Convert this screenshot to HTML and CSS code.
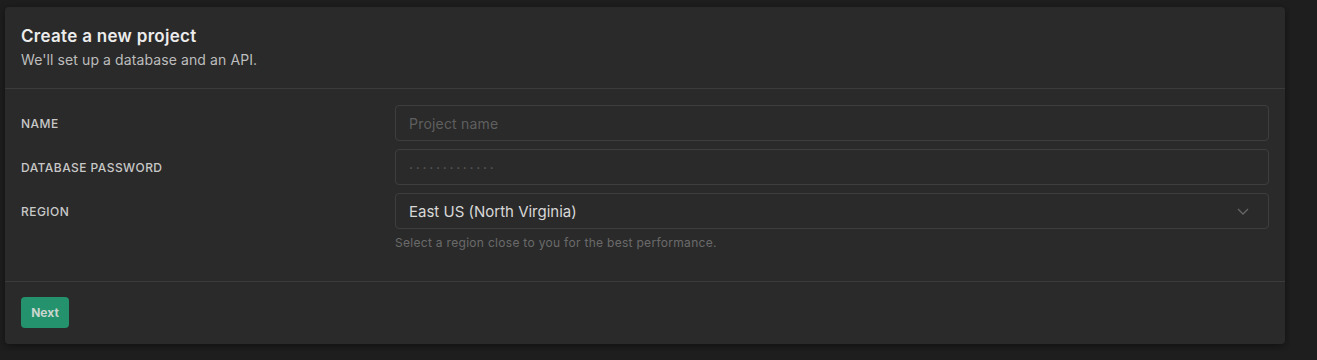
FILE: index.html
```html
<!DOCTYPE html>
<html>
	<head>
		<meta charset="UTF-8">
		<title>Create a new project</title>
		<link rel="stylesheet" href="styles.css">
	</head>
	<body>
		<div class="card">
			<div class="card-head">
				<h1>Create a new project</h1>
				<p>We'll set up a database and an API.</p>
			</div>
			<div class="card-body">
				<div class="row">
					<label>NAME</label>
					<div class="field">Project name</div>
				</div>
				<div class="row">
					<label>DATABASE PASSWORD</label>
					<div class="field dots">·············</div>
				</div>
				<div class="row">
					<label>REGION</label>
					<div class="field select">
						<span>East US (North Virginia)</span>
						<svg width="14" height="14" viewBox="0 0 14 14"><path d="M2 5l5 5 5-5" fill="none" stroke="#666" stroke-width="1.3"/></svg>
					</div>
				</div>
				<div class="row">
					<span></span>
					<div class="help">Select a region close to you for the best performance.</div>
				</div>
			</div>
			<div class="card-foot">
				<button class="btn">Next</button>
			</div>
		</div>
	</body>
</html>
```

FILE: styles.css
```css
*{
	padding: 0;
	margin: 0;
	box-sizing: border-box;
}
body{
	background: #1e1e1e;
	padding: 7px 5px;
	font-family: Inter, "Noto Sans", sans-serif;
	width: 1290px;
}
.card{
	width: 1280px;
	background: #2a2a2a;
	border-radius: 4px;
	box-shadow: 0 2px 8px rgba(0,0,0,.45);
}
.card-head{
	padding: 17px 16px 18px;
	border-bottom: 1px solid #3b3b3b;
}
.card-head h1{
	font-size: 17px;
	line-height: 24px;
	font-weight: 600;
	letter-spacing: 0.3px;
	color: #ececec;
}
.card-head p{
	margin-top: 2px;
	font-size: 14px;
	line-height: 20px;
	letter-spacing: 0.1px;
	color: #bdbdbd;
}
.card-body{
	padding: 16px 16px 29px;
	border-bottom: 1px solid #3b3b3b;
	display: grid;
	row-gap: 8px;
}
.row{
	display: grid;
	grid-template-columns: 374px 1fr;
	align-items: center;
}
.row label{
	font-size: 12px;
	font-weight: 500;
	letter-spacing: 0.45px;
	color: #c8c8c8;
}
.field{
	height: 36px;
	border: 1px solid #3e3e3e;
	border-radius: 4px;
	padding: 0 13px;
	display: flex;
	align-items: center;
	font-size: 14px;
	letter-spacing: 0.2px;
	color: #5f5f5f;
}
.dots{
	color: #5a5a5a;
	letter-spacing: 2.7px;
}
.select{
	justify-content: space-between;
	color: #d8d8d8;
	font-size: 15px;
	letter-spacing: 0;
	padding-right: 18px;
}
.help{
	margin-top: -3px;
	font-size: 12px;
	line-height: 18px;
	letter-spacing: 0.3px;
	color: #6a6a6a;
}
.card-foot{
	padding: 15px 16px 16px;
}
.btn{
	display: block;
	width: 48px;
	height: 31px;
	border: none;
	border-radius: 4px;
	background: #24926d;
	color: #c9d6cf;
	font-family: Inter, "Noto Sans", sans-serif;
	font-size: 12px;
	font-weight: 700;
}
```
